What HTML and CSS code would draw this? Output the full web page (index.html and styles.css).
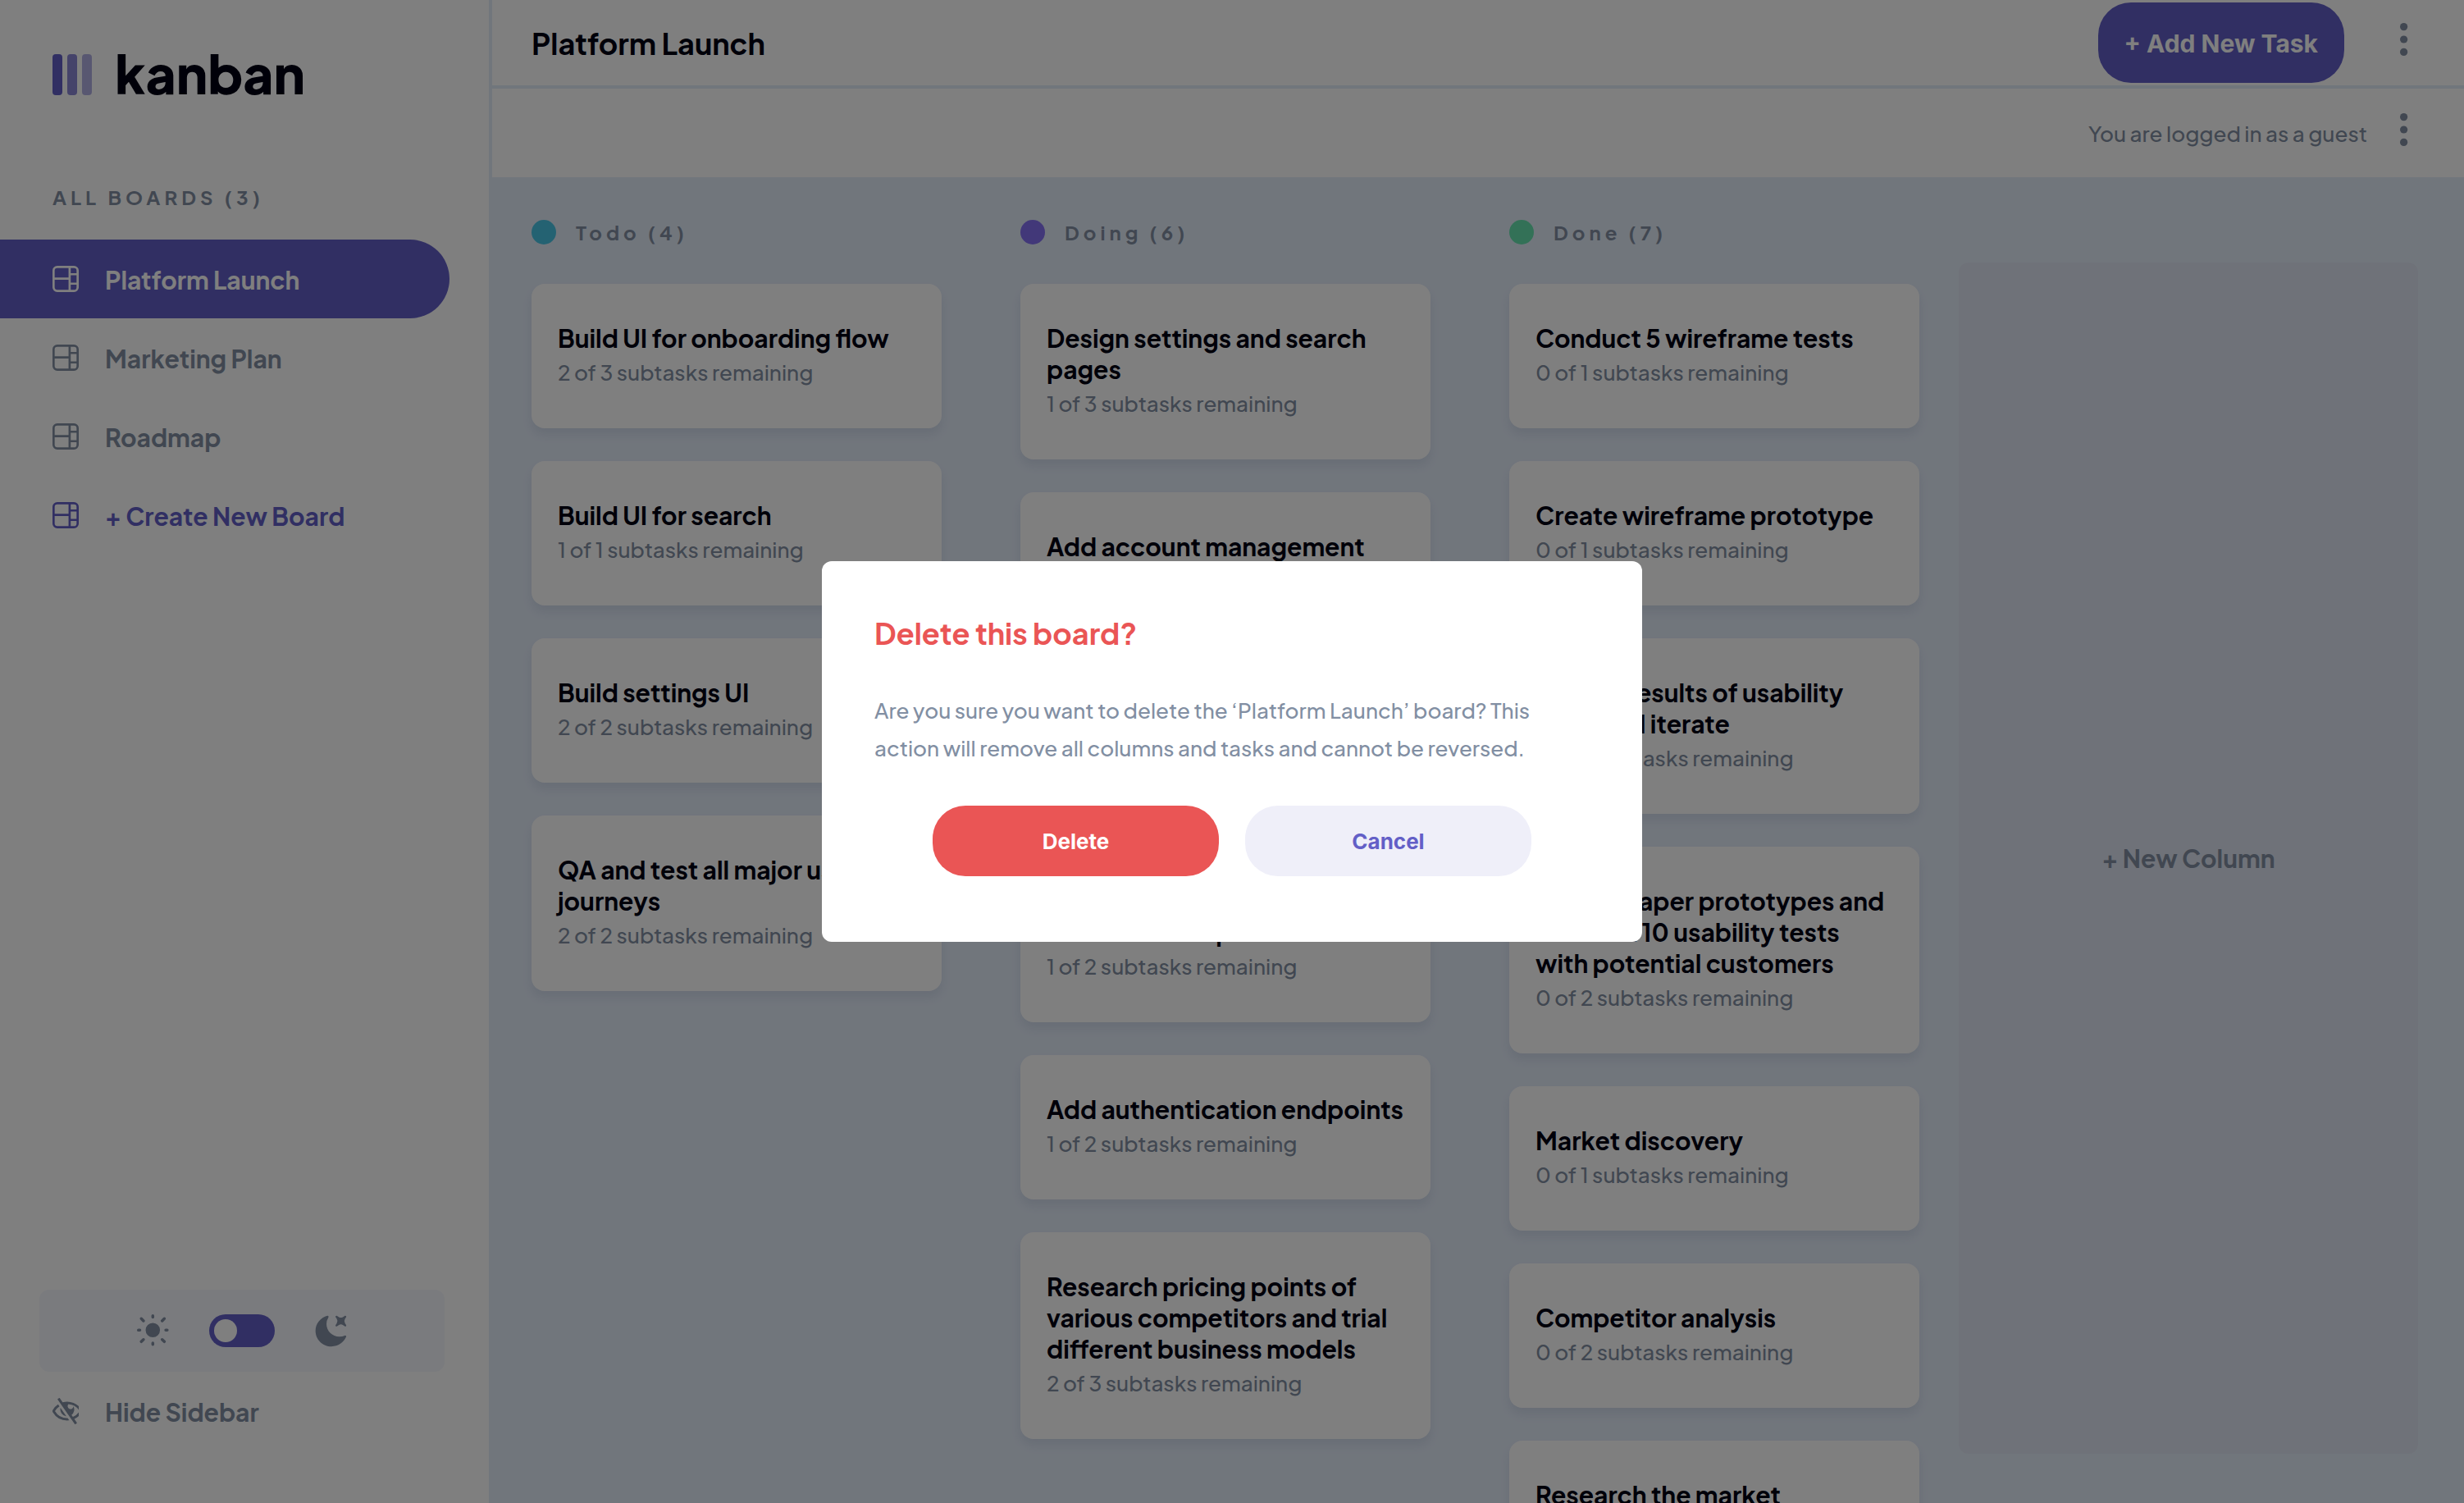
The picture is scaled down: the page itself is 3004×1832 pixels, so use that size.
FILE: index.html
```html
<!DOCTYPE html>
<html lang="en">
<head>
<meta charset="utf-8">
<title>Kanban</title>
<link rel="stylesheet" href="styles.css">
</head>
<body>
<svg width="0" height="0" class="sprite" aria-hidden="true">
  <symbol id="board" viewBox="0 0 16 16"><path fill="currentColor" d="M0 2.889A2.889 2.889 0 0 1 2.889 0H13.11A2.889 2.889 0 0 1 16 2.889V13.11A2.888 2.888 0 0 1 13.111 16H2.89A2.889 2.889 0 0 1 0 13.111V2.89Zm1.333 5.555v4.667c0 .859.697 1.556 1.556 1.556h6.889V8.444H1.333Zm8.445-1.333V1.333h-6.89A1.556 1.556 0 0 0 1.334 2.89V7.11h8.445Zm4.889-1.333H11.11v4.444h3.556V5.778Zm0 5.778H11.11v3.11h2a1.556 1.556 0 0 0 1.556-1.555v-1.555Zm0-7.112V2.89a1.555 1.555 0 0 0-1.556-1.556h-2v3.111h3.556Z"/></symbol>
  <symbol id="dots" viewBox="0 0 5 20"><g fill="currentColor"><circle cx="2.308" cy="2.308" r="2.308"/><circle cx="2.308" cy="10" r="2.308"/><circle cx="2.308" cy="17.692" r="2.308"/></g></symbol>
</svg>
<div class="app">
  <aside class="sidebar">
    <div class="logo">
      <svg class="logo-mark" viewBox="0 0 24 25" aria-hidden="true"><g fill="#635FC7"><rect width="6" height="25" rx="2"/><rect x="9" width="6" height="25" rx="2" opacity=".75"/><rect x="18" width="6" height="25" rx="2" opacity=".5"/></g></svg>
      <span class="logo-name">kanban</span>
    </div>
    <h2 class="boards-title">ALL BOARDS (3)</h2>
    <nav class="boards">
      <a class="board active" href="#platform"><svg class="icon"><use href="#board"/></svg>Platform Launch</a>
      <a class="board" href="#marketing"><svg class="icon"><use href="#board"/></svg>Marketing Plan</a>
      <a class="board" href="#roadmap"><svg class="icon"><use href="#board"/></svg>Roadmap</a>
      <button class="board create" type="button"><svg class="icon"><use href="#board"/></svg>+ Create New Board</button>
    </nav>
    <div class="theme">
      <svg class="sun" viewBox="0 0 19 19" aria-hidden="true"><path fill="currentColor" d="M9.167 15.833a.833.833 0 0 1 .833.834v.833a.833.833 0 0 1-1.667 0v-.833a.833.833 0 0 1 .834-.834ZM3.75 13.75a.833.833 0 0 1 .59 1.422l-1.25 1.25a.833.833 0 0 1-1.18-1.178l1.25-1.25a.833.833 0 0 1 .59-.244Zm10.833 0c.221 0 .433.088.59.244l1.25 1.25a.833.833 0 0 1-1.179 1.178l-1.25-1.25a.833.833 0 0 1 .59-1.422ZM9.167 5a4.167 4.167 0 1 1 0 8.334 4.167 4.167 0 0 1 0-8.334Zm-7.5 3.333a.833.833 0 0 1 0 1.667H.833a.833.833 0 1 1 0-1.667h.834Zm15.833 0a.833.833 0 0 1 0 1.667h-.833a.833.833 0 0 1 0-1.667h.833Zm-1.667-6.666a.833.833 0 0 1 .59 1.422l-1.25 1.25a.833.833 0 1 1-1.179-1.178l1.25-1.25a.833.833 0 0 1 .59-.244Zm-13.333 0c.221 0 .433.088.59.244l1.25 1.25a.833.833 0 0 1-1.18 1.178L1.91 3.09a.833.833 0 0 1 .59-1.422ZM9.167 0A.833.833 0 0 1 10 .833v.834a.833.833 0 1 1-1.667 0V.833A.833.833 0 0 1 9.167 0Z"/></svg>
      <input class="switch" type="checkbox" aria-label="Dark theme">
      <svg class="moon" viewBox="0 0 16 16" aria-hidden="true"><path fill="currentColor" d="M6.474.682c.434-.11.718.406.481.78A6.067 6.067 0 0 0 6.01 4.72c0 3.418 2.827 6.187 6.314 6.187.89.002 1.77-.182 2.584-.54.408-.18.894.165.724.57-1.16 2.775-3.944 4.73-7.194 4.73-4.292 0-7.771-3.41-7.771-7.615 0-3.541 2.466-6.518 5.807-7.37Zm8.433.07c.442-.294.969.232.674.674l-.525.787a1.943 1.943 0 0 0 0 2.157l.525.788c.295.441-.232.968-.674.673l-.787-.525a1.943 1.943 0 0 0-2.157 0l-.786.525c-.442.295-.97-.232-.675-.673l.525-.788a1.943 1.943 0 0 0 0-2.157l-.525-.787c-.295-.442.232-.968.674-.673l.787.525a1.943 1.943 0 0 0 2.157 0Z"/></svg>
    </div>
    <button class="board hide" type="button"><svg class="icon" viewBox="0 0 16 16"><path fill="currentColor" d="M8.522 11.223a4.252 4.252 0 0 1-3.654-5.22l3.654 5.22ZM9 12.25A8.685 8.685 0 0 1 1.5 8a8.612 8.612 0 0 1 2.76-2.864l-.86-1.23A10.112 10.112 0 0 0 .208 7.238a1.5 1.5 0 0 0 0 1.524A10.187 10.187 0 0 0 9 13.75c.414 0 .828-.025 1.239-.074l-1-1.43A8.88 8.88 0 0 1 9 12.25Zm8.792-3.488a10.14 10.14 0 0 1-4.486 4.046l1.504 2.148a.375.375 0 0 1-.092.523l-.648.453a.375.375 0 0 1-.523-.092L3.19 1.044A.375.375 0 0 1 3.282.52L3.93.068a.375.375 0 0 1 .523.092l1.735 2.479A10.308 10.308 0 0 1 9 2.25c3.746 0 7.031 2 8.792 4.988a1.5 1.5 0 0 1 0 1.524ZM16.5 8a8.674 8.674 0 0 0-6.755-4.219A1.75 1.75 0 1 0 12.75 5v-.001a4.25 4.25 0 0 1-1.154 5.366l.834 1.192A8.641 8.641 0 0 0 16.5 8Z"/></svg>Hide Sidebar</button>
  </aside>
  <main class="main">
    <header class="topbar">
      <h1 class="title">Platform Launch</h1>
      <button class="add" type="button">+ Add New Task</button>
      <button class="more" type="button" aria-label="Board menu"><svg class="dots"><use href="#dots"/></svg></button>
    </header>
    <div class="userbar">
      <span class="user">You are logged in as a guest</span>
      <button class="more" type="button" aria-label="User menu"><svg class="dots"><use href="#dots"/></svg></button>
    </div>
    <div class="columns">
      <section class="column">
        <h2 class="column-title"><span class="dot todo"></span>Todo (4)</h2>
        <article class="card"><h3>Build UI for onboarding flow</h3><p>2 of 3 subtasks remaining</p></article>
        <article class="card"><h3>Build UI for search</h3><p>1 of 1 subtasks remaining</p></article>
        <article class="card"><h3>Build settings UI</h3><p>2 of 2 subtasks remaining</p></article>
        <article class="card"><h3>QA and test all major user journeys</h3><p>2 of 2 subtasks remaining</p></article>
      </section>
      <section class="column">
        <h2 class="column-title"><span class="dot doing"></span>Doing (6)</h2>
        <article class="card"><h3>Design settings and search pages</h3><p>1 of 3 subtasks remaining</p></article>
        <article class="card"><h3>Add account management endpoints</h3><p>2 of 3 subtasks remaining</p></article>
        <article class="card"><h3>Design onboarding flow</h3><p>1 of 3 subtasks remaining</p></article>
        <article class="card"><h3>Add search enpoints</h3><p>1 of 2 subtasks remaining</p></article>
        <article class="card"><h3>Add authentication endpoints</h3><p>1 of 2 subtasks remaining</p></article>
        <article class="card"><h3>Research pricing points of various competitors and trial different business models</h3><p>2 of 3 subtasks remaining</p></article>
      </section>
      <section class="column">
        <h2 class="column-title"><span class="dot done"></span>Done (7)</h2>
        <article class="card"><h3>Conduct 5 wireframe tests</h3><p>0 of 1 subtasks remaining</p></article>
        <article class="card"><h3>Create wireframe prototype</h3><p>0 of 1 subtasks remaining</p></article>
        <article class="card"><h3>Review results of usability tests and iterate</h3><p>0 of 3 subtasks remaining</p></article>
        <article class="card"><h3>Create paper prototypes and conduct 10 usability tests with potential customers</h3><p>0 of 2 subtasks remaining</p></article>
        <article class="card"><h3>Market discovery</h3><p>0 of 1 subtasks remaining</p></article>
        <article class="card"><h3>Competitor analysis</h3><p>0 of 2 subtasks remaining</p></article>
        <article class="card"><h3>Research the market</h3><p>0 of 2 subtasks remaining</p></article>
      </section>
      <button class="new-column" type="button">+ New Column</button>
    </div>
  </main>
</div>
<div class="overlay">
  <div class="dialog" role="dialog" aria-modal="true" aria-labelledby="dialog-title">
    <h2 class="dialog-title" id="dialog-title">Delete this board?</h2>
    <p class="dialog-text">Are you sure you want to delete the ‘Platform Launch’ board? This action will remove all columns and tasks and cannot be reversed.</p>
    <div class="dialog-actions">
      <button class="action delete" type="button">Delete</button>
      <button class="action cancel" type="button">Cancel</button>
    </div>
  </div>
</div>
</body>
</html>
```

FILE: styles.css
```css
* { box-sizing: border-box; margin: 0; }

body {
  font-family: "Plus Jakarta Sans", "Open Sans", sans-serif;
  font-weight: 700;
  color: #000112;
  background: #e3ecf9;
  overflow: hidden;
}

button {
  font: inherit;
  color: inherit;
  border: 0;
  padding: 0;
  background: none;
  text-align: left;
  cursor: pointer;
}

.sprite { display: block; }

.app {
  display: flex;
  height: 100vh;
  overflow: hidden;
}

/* Sidebar */
.sidebar {
  flex: 0 0 600px;
  display: flex;
  flex-direction: column;
  padding-bottom: 64px;
  background: #fff;
  border-right: 4px solid #e3ecf9;
  color: #828fa3;
}

.logo {
  display: flex;
  align-items: center;
  gap: 28px;
  height: 184px;
  padding: 0 64px 2px;
  color: #000112;
}

.logo-mark { width: 48px; height: 50px; }

.logo-name {
  padding-bottom: 4px;
  font-size: 64px;
  font-weight: 800;
  line-height: 72px;
}

.boards-title {
  height: 108px;
  padding: 40px 64px 0;
  font-size: 24px;
  line-height: 32px;
  letter-spacing: 5px;
}

.board {
  display: flex;
  align-items: center;
  gap: 32px;
  width: 548px;
  height: 96px;
  padding: 2px 0 0 64px;
  font-size: 30px;
  text-decoration: none;
  color: #828fa3;
}

.icon { width: 32px; height: 32px; margin-bottom: 2px; }
.active { background: #635fc7; color: #fff; border-radius: 0 48px 48px 0; }
.create { color: #635fc7; }

.theme {
  display: flex;
  align-items: center;
  justify-content: center;
  gap: 48px;
  height: 100px;
  margin: auto 54px 0 48px;
  border-radius: 12px;
  background: #f4f7fd;
}

.sun { width: 40px; height: 40px; }
.moon { width: 40px; height: 40px; }

.switch {
  appearance: none;
  display: flex;
  align-items: center;
  width: 80px;
  height: 40px;
  margin: 0;
  padding: 6px;
  border-radius: 20px;
  background: #635fc7;
}

.switch::before {
  content: "";
  width: 28px;
  height: 28px;
  border-radius: 50%;
  background: #fff;
}

/* Board */
.main { flex: 1; min-width: 0; }

.topbar, .userbar {
  display: flex;
  align-items: center;
  justify-content: flex-end;
  height: 108px;
  padding: 0 68px 0 48px;
  background: #fff;
}

.topbar { border-bottom: 4px solid #e3ecf9; }
.title { margin-right: auto; font-size: 36px; }

.add {
  height: 98px;
  padding: 2px 32px 0;
  border-radius: 40px;
  background: #635fc7;
  color: #fff;
  font-family: Inter, sans-serif;
  font-size: 30px;
}

.more { margin-left: 68px; padding-bottom: 8px; color: #828fa3; }
.user + .more { margin-left: 40px; }
.dots { display: block; width: 10px; height: 40px; }
.user { font-size: 26px; font-weight: 500; color: #828fa3; }

.columns {
  display: flex;
  align-items: flex-start;
  gap: 96px;
  padding: 48px;
}

.column { flex: 0 0 500px; }

.column-title {
  display: flex;
  align-items: center;
  gap: 24px;
  height: 38px;
  margin-bottom: 44px;
  font-size: 24px;
  letter-spacing: 5px;
  color: #828fa3;
}

.dot { width: 30px; height: 30px; border-radius: 50%; }
.todo { background: #49c4e5; }
.doing { background: #8471f2; }
.done { background: #67e2ae; }

.card {
  margin-bottom: 40px;
  padding: 47px 32px 49px;
  border-radius: 16px;
  background: #fff;
  box-shadow: 0 8px 12px rgba(54, 78, 126, .1);
}

.card h3 { font-size: 30px; line-height: 38px; }
.card p { margin-top: 4px; font-size: 26px; line-height: 38px; font-weight: 500; color: #828fa3; }

.new-column {
  flex: 0 0 560px;
  height: 1452px;
  margin: 56px 0 0 -48px;
  border-radius: 12px;
  background: #dfe5f2;
  text-align: center;
  font-size: 30px;
  color: #828fa3;
}

/* Dialog */
.overlay {
  position: fixed;
  inset: 0;
  display: grid;
  place-items: center;
  background: rgba(0, 0, 0, .5);
}

.dialog {
  width: 1000px;
  padding: 64px 64px 80px;
  border-radius: 12px;
  background: #fff;
}

.dialog-title { font-size: 36px; line-height: 48px; color: #ea5555; }
.dialog-text { margin-top: 47px; font-size: 26px; line-height: 46px; font-weight: 500; color: #828fa3; }
.dialog-actions { display: flex; justify-content: center; gap: 32px; margin-top: 47px; }

.action {
  width: 349px;
  height: 86px;
  border-radius: 40px;
  font-family: Inter, sans-serif;
  font-size: 26px;
  text-align: center;
}

.delete { background: #ea5555; color: #fff; }
.cancel { background: #efeff9; color: #635fc7; }
```
